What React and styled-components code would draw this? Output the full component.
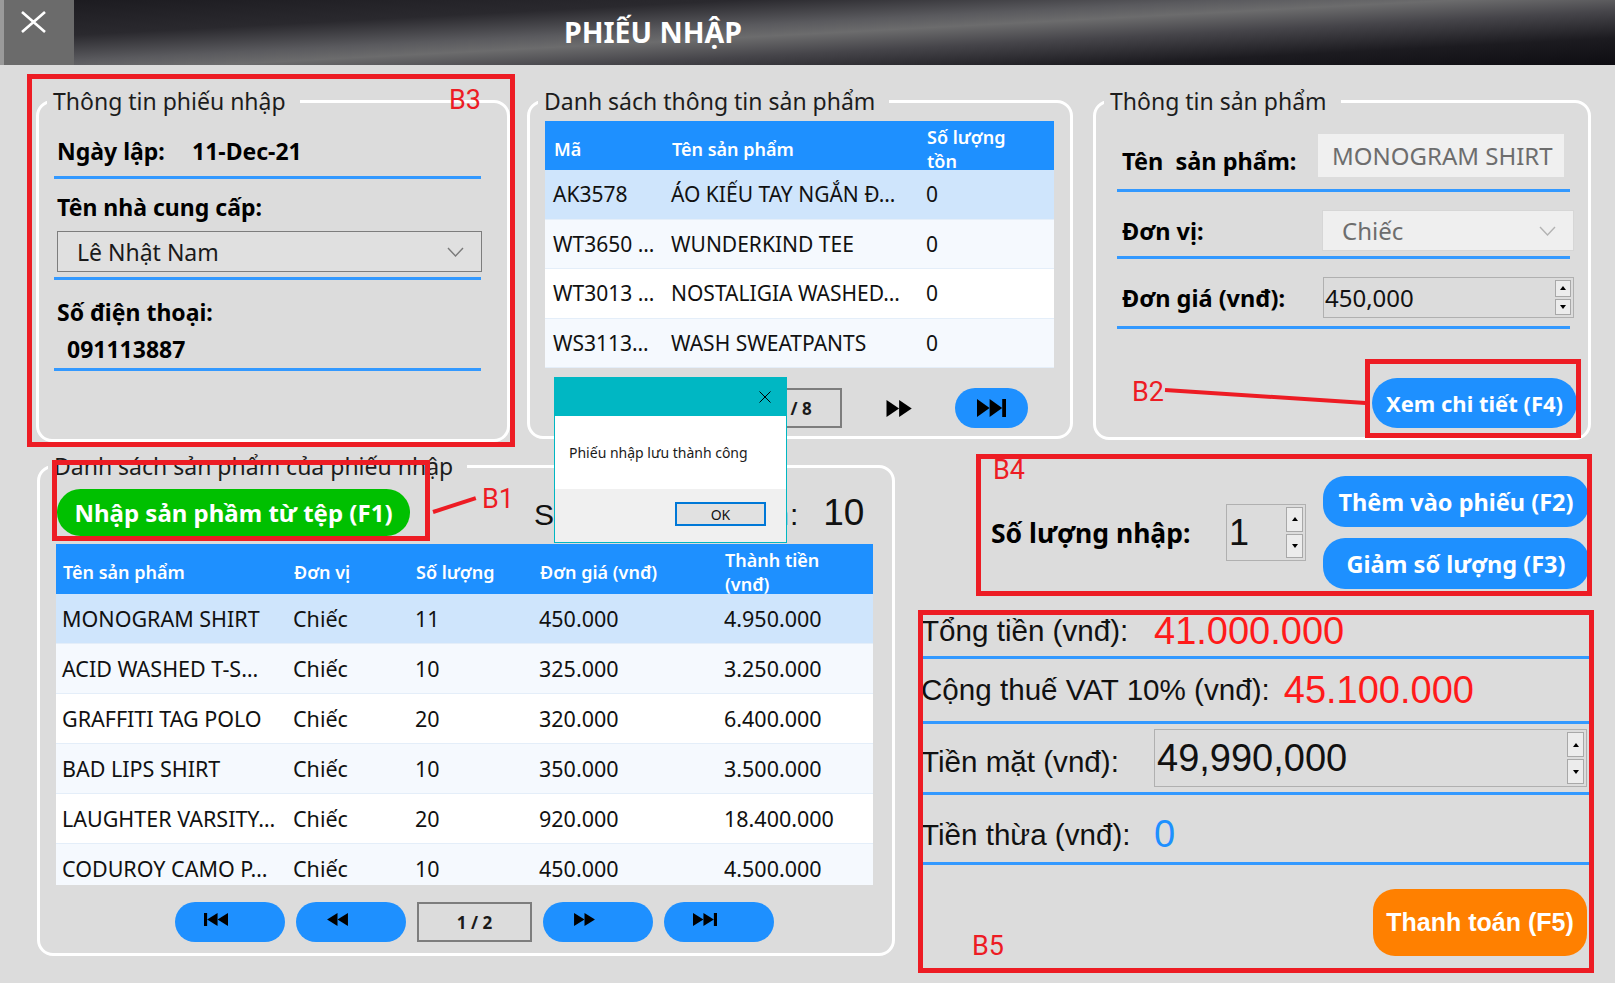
import React from "react"
import styled, {createGlobalStyle} from "styled-components"

const BLUE = "#1e90ff"
const RULE = "#3399ff"
const RED = "#ed1c24"
const ARIAL = `"Liberation Sans", Arial, sans-serif`

const GlobalStyle = createGlobalStyle`
  html, body {
    margin: 0;
    padding: 0;
    background: #dcdcdc;
  }
  body {
    font-family: "Noto Sans", "Open Sans", sans-serif;
    color: #000;
  }
  *, *::before, *::after {
    box-sizing: border-box;
  }
`

const Screen = styled.div`
  position: relative;
  width: 1615px;
  height: 983px;
  overflow: hidden;
  display: flex;
  flex-direction: column;
  background: #dcdcdc;
`

/* ---------- title bar ---------- */

const TitleBar = styled.header`
  flex: none;
  display: flex;
  height: 65px;
  background: linear-gradient(
    177deg,
    #1b1a1f 0%,
    #2a292e 26%,
    #5a5a5e 43%,
    #6c6c6d 51%,
    #46454a 64%,
    #1c1b20 82%,
    #0e0d12 100%
  );
`

const CloseBox = styled.div`
  width: 74px;
  display: flex;
  padding: 11px 0 0 21px;
  background: #6b6b6b;
  box-shadow: inset 4px 0 0 #9a9a9a;
`

const Title = styled.h1`
  margin: 0 0 0 490px;
  align-self: center;
  color: #fff;
  font-size: 28.5px;
  font-weight: 700;
  line-height: 1;
`

/* ---------- group boxes ---------- */

const Panel = styled.fieldset`
  margin: 0 0 0 ${p => p.$ml || 0}px;
  padding: 0;
  min-width: 0;
  width: ${p => p.$w}px;
  height: ${p => p.$h}px;
  border: 3px solid #fff;
  border-radius: 16px;
`

const Legend = styled.legend`
  margin-left: 8px;
  padding: 0 14px 0 6px;
  font-size: 23px;
  line-height: 30px;
  color: #1c1c1c;
`

const PanelBody = styled.div`
  display: flex;
  flex-direction: column;
  padding: 0 ${p => p.$pr}px 0 ${p => p.$pl}px;
`

const TopRow = styled.div`
  display: flex;
  align-items: flex-start;
  padding: 21px 0 0 36px;
`

const BottomRow = styled.div`
  display: flex;
  align-items: flex-start;
  margin-top: 9px;
  padding-left: 37px;
`

/* ---------- annotation callouts (drawn over the screenshot) ---------- */

const Callout = styled.div`
  position: relative;

  &::after {
    content: "";
    position: absolute;
    inset: ${p => p.$frame};
    border: 5px solid ${RED};
    pointer-events: none;
  }
`

const Tag = styled.span`
  position: absolute;
  left: ${p => p.$x}px;
  top: ${p => p.$y}px;
  font-family: Roboto, sans-serif;
  font-size: 27px;
  line-height: 28px;
  color: ${RED};
  pointer-events: none;
`

const Connector = styled.span`
  position: absolute;
  left: ${p => p.$x}px;
  top: ${p => p.$y - 2}px;
  width: ${p => p.$len}px;
  height: 4px;
  background: ${RED};
  transform-origin: 0 50%;
  transform: rotate(${p => p.$deg}deg);
`

/* ---------- form parts ---------- */

const Rule = styled.div`
  flex: none;
  height: 3px;
  margin: ${p => p.$mt}px ${p => p.$mr || 0}px 0 0;
  background: ${RULE};
`

const BoldLine = styled.div`
  display: flex;
  margin-top: ${p => p.$mt}px;
  padding-left: ${p => p.$indent ?? 3}px;
  font-size: 23px;
  font-weight: 700;
  line-height: 34px;
`

const DateKey = styled.span`
  width: 135px;
`

const Combo = styled.div`
  display: flex;
  align-items: center;
  justify-content: space-between;
  height: 41px;
  margin: ${p => p.$margin};
  padding: 0 17px 0 19px;
  font-size: ${p => (p.$disabled ? 24 : 23)}px;
  color: ${p => (p.$disabled ? "#6d6d6d" : "#1a1a1a")};
  background: ${p => (p.$disabled ? "#efefef" : "#e0e0e0")};
  border: 1px solid ${p => (p.$disabled ? "#d6d6d6" : "#7d7d7d")};
`

const Chevron = ({color}) => (
  <svg width="17" height="10" viewBox="0 0 17 10">
    <polyline points="1,1 8.5,9 16,1" fill="none" stroke={color} strokeWidth="1.4" />
  </svg>
)

const FieldRow = styled.div`
  display: grid;
  grid-template-columns: 201px 1fr;
  align-items: center;
  height: ${p => p.$h}px;
  margin-top: 18px;
`

const FieldLabel = styled.div`
  padding: ${p => p.$pt || 0}px 0 0 5px;
  font-size: 23.5px;
  font-weight: 700;
  white-space: pre;
`

const TextBox = styled.div`
  display: flex;
  align-items: center;
  height: 43px;
  margin-right: 10px;
  padding-left: 14px;
  font-size: 24px;
  color: #6d6d6d;
  background: #f0f0f0;
`

const SpinBox = styled.div`
  display: flex;
  align-items: center;
  width: ${p => (p.$w ? `${p.$w}px` : "auto")};
  height: ${p => p.$h}px;
  margin-left: ${p => p.$ml || 0}px;
  padding: 0 2px 0 ${p => p.$pl}px;
  font-family: ${p => (p.$arial ? ARIAL : "inherit")};
  font-size: ${p => p.$fs}px;
  color: #111;
  background: #dcdcdc;
  border: 1px solid #b0b0b0;
`

const SpinValue = styled.span`
  flex: 1;
  line-height: 1;
`

const Spinner = styled.div`
  display: flex;
  flex-direction: column;
  gap: 2px;
  align-self: stretch;
  padding: 2px 0;
`

const SpinButton = styled.div`
  flex: 1;
  width: ${p => p.$w}px;
  display: flex;
  align-items: center;
  justify-content: center;
  background: #ececec;
  border: 1px solid #a8a8a8;

  &::before {
    content: "";
    border-left: 3px solid transparent;
    border-right: 3px solid transparent;
    ${p => (p.$down ? "border-top" : "border-bottom")}: 4px solid #000;
  }
`

const Spin = ({value, w, h, fs, pl, arial, ml, btn = 16}) => (
  <SpinBox $w={w} $h={h} $fs={fs} $pl={pl} $arial={arial} $ml={ml}>
    <SpinValue>{value}</SpinValue>
    <Spinner>
      <SpinButton $w={btn} />
      <SpinButton $w={btn} $down />
    </Spinner>
  </SpinBox>
)

const PillButton = styled.button`
  display: flex;
  align-items: center;
  justify-content: center;
  width: ${p => p.$w}px;
  height: ${p => p.$h}px;
  padding: 0;
  border: 0;
  border-radius: ${p => p.$r}px;
  background: ${p => p.$bg || BLUE};
  color: #fff;
  font-family: inherit;
  font-size: ${p => p.$fs || 22}px;
  font-weight: 700;
  white-space: nowrap;
`

/* ---------- tables ---------- */

const Table = styled.div`
  display: flex;
  flex-direction: column;
  margin-top: ${p => p.$mt}px;
`

const HeaderRow = styled.div`
  display: grid;
  grid-template-columns: ${p => p.$cols};
  height: ${p => p.$h}px;
  background: ${BLUE};
  color: #fff;
  font-size: 18px;
  font-weight: 600;
  line-height: 24px;
  overflow: hidden;
`

const HeadCell = styled.div`
  display: flex;
  align-items: center;
  padding: 6px 0 0 ${p => p.$pad}px;
  overflow: hidden;
`

const RowViewport = styled.div`
  height: ${p => p.$h}px;
  overflow: hidden;
`

const Row = styled.div`
  display: grid;
  grid-template-columns: ${p => p.$cols};
  align-items: center;
  height: ${p => p.$h}px;
  font-size: ${p => p.$fs}px;
  color: #111;
  background: ${p => (p.$selected ? "#cfe5fc" : p.$alt ? "#f5f9fe" : "#fff")};
  border-bottom: 1px solid #e4eef9;
`

const Cell = styled.div`
  padding-left: ${p => p.$pad}px;
  white-space: nowrap;
  overflow: hidden;
`

/* ---------- pagination ---------- */

const Pager = styled.div`
  display: flex;
  align-items: center;
  gap: ${p => p.$gap}px;
  height: 40px;
  margin: ${p => p.$mt}px 0 0 ${p => p.$ml}px;
`

const NavButton = styled.button`
  display: flex;
  align-items: center;
  justify-content: ${p => (p.$iconLeft ? "flex-start" : "center")};
  width: ${p => p.$w}px;
  height: 40px;
  padding: ${p => (p.$iconLeft ? "0 0 5px 29px" : "0")};
  border: 0;
  border-radius: 20px;
  background: ${p => (p.$flat ? "transparent" : BLUE)};
`

const PageBox = styled.div`
  display: flex;
  align-items: center;
  justify-content: center;
  width: ${p => p.$w}px;
  height: 40px;
  border: 2px solid #7d7d7d;
  font-size: 17px;
  font-weight: 700;
  color: #1a1a1a;
`

const NavIcon = ({kind, w, h}) => {
  const left = x => `M${x} 7L${x + 10} 0V14Z`
  const right = x => `M${x + 10} 7L${x} 0V14Z`
  const paths = {
    first: [<rect key="b" x="0" y="0" width="3" height="14" />, <path key="a" d={left(3)} />, <path key="c" d={left(13)} />],
    prev: [<path key="a" d={left(2)} />, <path key="c" d={left(12)} />],
    next: [<path key="a" d={right(2)} />, <path key="c" d={right(12)} />],
    last: [<path key="a" d={right(0)} />, <path key="c" d={right(10)} />, <rect key="b" x="20" y="0" width="3" height="14" />]
  }
  return (
    <svg width={w} height={h} viewBox="0 0 23 14" preserveAspectRatio="none" fill="#000">
      {paths[kind]}
    </svg>
  )
}

/* ---------- lower-left tools ---------- */

const ToolRow = styled.div`
  display: flex;
  align-items: center;
  margin-top: 8px;
  padding-left: 1px;
`

const CountLabel = styled.div`
  margin-left: 124px;
  font-family: ${ARIAL};
  font-size: 30px;
  letter-spacing: 1px;
  color: #111;
`

const CountValue = styled.span`
  margin-left: 24px;
  font-size: 37px;
  letter-spacing: 0;
`

/* ---------- right column ---------- */

const RightColumn = styled.div`
  display: flex;
  flex-direction: column;
  width: 668px;
  margin-left: 26px;
`

const QtyRow = styled(Callout)`
  display: flex;
  align-items: center;
  height: 113px;
  margin-top: 25px;
  padding-left: 70px;
`

const QtyLabel = styled.div`
  width: 235px;
  font-size: 26.5px;
  font-weight: 700;
`

const QtyActions = styled.div`
  display: flex;
  flex-direction: column;
  gap: 11px;
  margin-left: 17px;
`

const Summary = styled(Callout)`
  display: flex;
  flex-direction: column;
  margin-top: 17px;
  font-family: ${ARIAL};
`

const SumRow = styled.div`
  display: flex;
  align-items: center;
  gap: 14px;
  height: ${p => p.$h}px;
  padding-top: ${p => p.$pt || 0}px;
  border-bottom: 3px solid ${RULE};
`

const SumLabel = styled.span`
  min-width: 219px;
  padding-top: ${p => p.$pt || 0}px;
  font-size: 29.6px;
  color: #111;
`

const SumValue = styled.span`
  font-size: 38px;
  color: ${p => p.$color};
`

const ActionRow = styled.div`
  display: flex;
  justify-content: flex-end;
  margin: ${p => p.$mt}px ${p => p.$mr}px 0 0;
`

/* ---------- message box ---------- */

const Dialog = styled.div`
  position: absolute;
  left: 554px;
  top: 377px;
  width: 233px;
  height: 166px;
  display: flex;
  flex-direction: column;
  background: #fff;
  border: 1px solid #00b7c3;
  font-size: 14px;
  z-index: 5;
`

const DialogTitle = styled.div`
  display: flex;
  align-items: center;
  justify-content: flex-end;
  height: 38px;
  padding-right: 15px;
  background: #00b7c3;
`

const DialogBody = styled.div`
  height: 73px;
  padding: 27px 0 0 14px;
  color: #1a1a1a;
`

const DialogFooter = styled.div`
  flex: 1;
  display: flex;
  justify-content: flex-end;
  padding: 13px 20px 0 0;
  background: #f0f0f0;
`

const OkButton = styled.button`
  width: 91px;
  height: 24px;
  padding: 0;
  border: 2px solid #0078d7;
  background: #e1e1e1;
  font-family: inherit;
  font-size: 14px;
  color: #111;
`

/* ---------- data ---------- */

const STOCK_COLS = "118px 255px 1fr"
const stock = [
  ["AK3578", "ÁO KIỂU TAY NGẮN Đ…", "0"],
  ["WT3650 …", "WUNDERKIND TEE", "0"],
  ["WT3013 …", "NOSTALIGIA WASHED…", "0"],
  ["WS3113…", "WASH SWEATPANTS", "0"]
]

const LINE_COLS = "231px 122px 124px 185px 1fr"
const lines = [
  ["MONOGRAM SHIRT", "Chiếc", "11", "450.000", "4.950.000"],
  ["ACID WASHED T-S…", "Chiếc", "10", "325.000", "3.250.000"],
  ["GRAFFITI TAG POLO", "Chiếc", "20", "320.000", "6.400.000"],
  ["BAD LIPS SHIRT", "Chiếc", "10", "350.000", "3.500.000"],
  ["LAUGHTER VARSITY…", "Chiếc", "20", "920.000", "18.400.000"],
  ["CODUROY CAMO P…", "Chiếc", "10", "450.000", "4.500.000"]
]

export default function App() {
  return (
    <Screen>
      <GlobalStyle />
      <TitleBar>
        <CloseBox>
          <svg width="25" height="22" viewBox="0 0 25 22">
            <path d="M1 1L24 21M24 1L1 21" stroke="#fff" strokeWidth="2.6" />
          </svg>
        </CloseBox>
        <Title>PHIẾU NHẬP</Title>
      </TitleBar>

      <TopRow>
        <Callout $frame="-12px -5px -5px -9px">
          <Panel $w={474} $h={356}>
            <Legend>Thông tin phiếu nhập</Legend>
            <PanelBody $pl={15} $pr={26}>
              <BoldLine $mt={18}>
                <DateKey>Ngày lập:</DateKey>
                <span>11-Dec-21</span>
              </BoldLine>
              <Rule $mt={8} />
              <BoldLine $mt={11}>Tên nhà cung cấp:</BoldLine>
              <Combo $margin="7px -1px 0 3px">
                <span>Lê Nhật Nam</span>
                <Chevron color="#7a7a7a" />
              </Combo>
              <Rule $mt={5} />
              <BoldLine $mt={15}>Số điện thoại:</BoldLine>
              <BoldLine $mt={3} $indent={13}>091113887</BoldLine>
              <Rule $mt={2} />
            </PanelBody>
          </Panel>
          <Tag $x={413} $y={0}>B3</Tag>
        </Callout>

        <Panel $ml={17} $w={546} $h={353}>
          <Legend>Danh sách thông tin sản phẩm</Legend>
          <PanelBody $pl={15} $pr={16}>
            <Table $mt={5}>
              <HeaderRow $cols={STOCK_COLS} $h={49}>
                <HeadCell $pad={9}>Mã</HeadCell>
                <HeadCell $pad={9}>Tên sản phẩm</HeadCell>
                <HeadCell $pad={9}>
                  Số lượng
                  <br />
                  tồn
                </HeadCell>
              </HeaderRow>
              {stock.map((r, i) => (
                <Row key={r[0]} $cols={STOCK_COLS} $h={49.5} $fs={21} $selected={i === 0} $alt={i % 2 === 1}>
                  {r.map((c, j) => (
                    <Cell key={j} $pad={8}>{c}</Cell>
                  ))}
                </Row>
              ))}
            </Table>
            <Pager $mt={20} $ml={15} $gap={20}>
              <NavButton $w={73}><NavIcon kind="first" w={29} h={18} /></NavButton>
              <NavButton $w={73}><NavIcon kind="prev" w={29} h={18} /></NavButton>
              <PageBox $w={96}>1 / 8</PageBox>
              <NavButton $w={73} $flat><NavIcon kind="next" w={29} h={17} /></NavButton>
              <NavButton $w={73}><NavIcon kind="last" w={29} h={18} /></NavButton>
            </Pager>
          </PanelBody>
        </Panel>

        <Panel $ml={20} $w={498} $h={354}>
          <Legend>Thông tin sản phẩm</Legend>
          <PanelBody $pl={21} $pr={14}>
            <FieldRow $h={43}>
              <FieldLabel $pt={10}>{"Tên  sản phẩm:"}</FieldLabel>
              <TextBox>MONOGRAM SHIRT</TextBox>
            </FieldRow>
            <Rule $mt={12} $mr={4} />
            <FieldRow $h={41}>
              <FieldLabel>Đơn vị:</FieldLabel>
              <Combo $disabled $margin="0 0 0 4px">
                <span>Chiếc</span>
                <Chevron color="#b3b3b3" />
              </Combo>
            </FieldRow>
            <Rule $mt={5} $mr={4} />
            <FieldRow $h={41}>
              <FieldLabel>Đơn giá (vnđ):</FieldLabel>
              <Spin value="450,000" h={41} fs={24} pl={1} ml={5} />
            </FieldRow>
            <Rule $mt={8} $mr={4} />
            <ActionRow $mt={49} $mr={-3}>
              <Callout $frame="-19px -4px -10px -7px">
                <PillButton $w={205} $h={50} $r={25}>Xem chi tiết (F4)</PillButton>
                <Tag $x={-240} $y={0}>B2</Tag>
                <Connector $x={-207} $y={12} $len={201} $deg={3.7} />
              </Callout>
            </ActionRow>
          </PanelBody>
        </Panel>
      </TopRow>

      <BottomRow>
        <Panel $w={858} $h={505}>
          <Legend>Danh sách sản phẩm của phiếu nhập</Legend>
          <PanelBody $pl={16} $pr={19}>
            <ToolRow>
              <Callout $frame="-29px -20px -5px -5px">
                <PillButton $w={353} $h={47} $r={24} $bg="#00c000" $fs={24}>
                  Nhập sản phầm từ tệp (F1)
                </PillButton>
                <Tag $x={425} $y={-4}>B1</Tag>
                <Connector $x={376} $y={23} $len={45} $deg={-18} />
              </Callout>
              <CountLabel>
                Số lượng đã chọn:<CountValue>10</CountValue>
              </CountLabel>
            </ToolRow>
            <Table $mt={8}>
              <HeaderRow $cols={LINE_COLS} $h={50}>
                <HeadCell $pad={7}>Tên sản phẩm</HeadCell>
                <HeadCell $pad={7}>Đơn vị</HeadCell>
                <HeadCell $pad={7}>Số lượng</HeadCell>
                <HeadCell $pad={7}>Đơn giá (vnđ)</HeadCell>
                <HeadCell $pad={7}>
                  Thành tiền
                  <br />
                  (vnđ)
                </HeadCell>
              </HeaderRow>
              <RowViewport $h={291}>
                {lines.map((r, i) => (
                  <Row key={r[0]} $cols={LINE_COLS} $h={50} $fs={21.5} $selected={i === 0} $alt={i % 2 === 1}>
                    {r.map((c, j) => (
                      <Cell key={j} $pad={6}>{c}</Cell>
                    ))}
                  </Row>
                ))}
              </RowViewport>
            </Table>
            <Pager $mt={17} $ml={119} $gap={11}>
              <NavButton $w={110} $iconLeft><NavIcon kind="first" w={24} h={13} /></NavButton>
              <NavButton $w={110} $iconLeft><NavIcon kind="prev" w={24} h={13} /></NavButton>
              <PageBox $w={115}>1 / 2</PageBox>
              <NavButton $w={110} $iconLeft><NavIcon kind="next" w={24} h={13} /></NavButton>
              <NavButton $w={110} $iconLeft><NavIcon kind="last" w={24} h={13} /></NavButton>
            </Pager>
          </PanelBody>
        </Panel>

        <RightColumn>
          <QtyRow $frame="-22px -3px -7px 55px">
            <QtyLabel>Số lượng nhập:</QtyLabel>
            <Spin value="1" w={80} h={57} fs={36} pl={2} arial btn={17} />
            <QtyActions>
              <PillButton $w={266} $h={51} $r={22} $fs={23.5}>Thêm vào phiếu (F2)</PillButton>
              <PillButton $w={266} $h={51} $r={22} $fs={23.5}>Giảm số lượng (F3)</PillButton>
            </QtyActions>
            <Tag $x={72} $y={-20}>B4</Tag>
          </QtyRow>

          <Summary $frame="4px -5px -17px -3px">
            <SumRow $h={53}>
              <SumLabel>Tổng tiền (vnđ):</SumLabel>
              <SumValue $color="#ff1a1a">41.000.000</SumValue>
            </SumRow>
            <SumRow $h={65}>
              <SumLabel>Cộng thuế VAT 10% (vnđ):</SumLabel>
              <SumValue $color="#ff1a1a">45.100.000</SumValue>
            </SumRow>
            <SumRow $h={71}>
              <SumLabel $pt={8}>Tiền mặt (vnđ):</SumLabel>
              <Spin value="49,990,000" w={433} h={58} fs={38} pl={2} arial btn={17} />
            </SumRow>
            <SumRow $h={70} $pt={12}>
              <SumLabel>Tiền thừa (vnđ):</SumLabel>
              <SumValue $color={BLUE}>0</SumValue>
            </SumRow>
            <ActionRow $mt={24} $mr={2}>
              <PillButton $w={214} $h={67} $r={22} $bg="#ff8000" $fs={25}>Thanh toán (F5)</PillButton>
            </ActionRow>
            <Tag $x={51} $y={326}>B5</Tag>
          </Summary>
        </RightColumn>
      </BottomRow>

      <Dialog>
        <DialogTitle>
          <svg width="12" height="12" viewBox="0 0 12 12">
            <path d="M0.5 0.5L11.5 11.5M11.5 0.5L0.5 11.5" stroke="#000" strokeWidth="1" />
          </svg>
        </DialogTitle>
        <DialogBody>Phiếu nhập lưu thành công</DialogBody>
        <DialogFooter>
          <OkButton>OK</OkButton>
        </DialogFooter>
      </Dialog>
    </Screen>
  )
}
